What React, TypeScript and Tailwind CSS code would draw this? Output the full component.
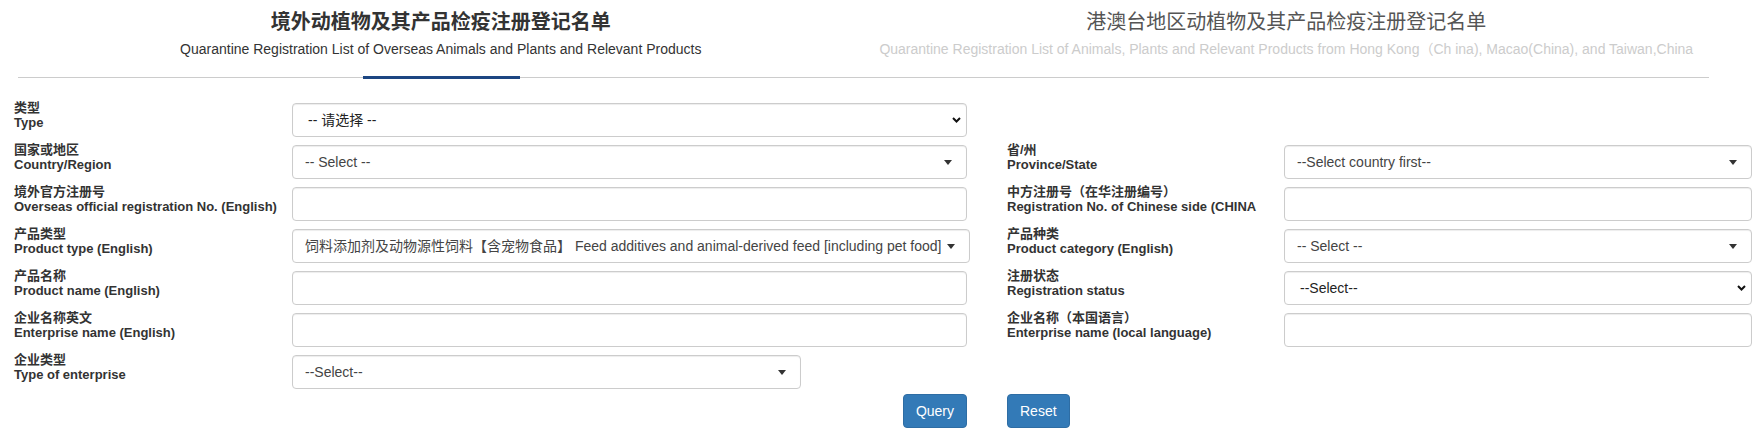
import React from 'react';

type Field = {
    zh: string;
    en: string;
    kind: 'native' | 'select2' | 'input';
    value?: string;
    narrow?: boolean;
};

const rows: { left: Field; right: Field | null }[] = [
    { left: { zh: '类型', en: 'Type', kind: 'native', value: '-- 请选择 --' }, right: null },
    {
        left: { zh: '国家或地区', en: 'Country/Region', kind: 'select2', value: '-- Select --' },
        right: { zh: '省/州', en: 'Province/State', kind: 'select2', value: '--Select country first--' },
    },
    {
        left: { zh: '境外官方注册号', en: 'Overseas official registration No. (English)', kind: 'input' },
        right: { zh: '中方注册号（在华注册编号）', en: 'Registration No. of Chinese side (CHINA', kind: 'input' },
    },
    {
        left: {
            zh: '产品类型',
            en: 'Product type (English)',
            kind: 'select2',
            value: '饲料添加剂及动物源性饲料【含宠物食品】 Feed additives and animal-derived feed [including pet food]',
        },
        right: { zh: '产品种类', en: 'Product category (English)', kind: 'select2', value: '-- Select --' },
    },
    {
        left: { zh: '产品名称', en: 'Product name (English)', kind: 'input' },
        right: { zh: '注册状态', en: 'Registration status', kind: 'native', value: '--Select--' },
    },
    {
        left: { zh: '企业名称英文', en: 'Enterprise name (English)', kind: 'input' },
        right: { zh: '企业名称（本国语言）', en: 'Enterprise name (local language)', kind: 'input' },
    },
    { left: { zh: '企业类型', en: 'Type of enterprise', kind: 'select2', value: '--Select--', narrow: true }, right: null },
];

const font = { fontFamily: '"Liberation Sans", Arial, "Noto Sans CJK SC", sans-serif' };

function Control({ field }: { field: Field }) {
    const box =
        'mt-[3px] h-[34px] flex items-center bg-white border border-[#ccc] rounded-[4px] shadow-[inset_0_1px_1px_rgba(0,0,0,0.075)] text-[14px]';
    const width = field.narrow ? 'w-[509px]' : 'flex-1';

    if (field.kind === 'input') {
        return <div className={`${box} ${width}`} />;
    }

    if (field.kind === 'native') {
        return (
            <div className={`${box} ${width} pl-[15px] pr-[5px] text-[#222]`}>
                <span className="flex-1 whitespace-nowrap">{field.value}</span>
                <svg width="9" height="6" viewBox="0 0 9 6" className="mb-[1px]">
                    <polyline points="1,1 4.5,4.5 8,1" fill="none" stroke="#111" strokeWidth="2" />
                </svg>
            </div>
        );
    }

    // select2 style
    return (
        <div className={`${box} ${width} pl-[12px] pr-[14px] text-[#444]`}>
            <span className="flex-1 whitespace-nowrap overflow-hidden">{field.value}</span>
            <svg width="8" height="5" viewBox="0 0 8 5" className="ml-[6px]">
                <polygon points="0,0 8,0 4,5" fill="#333" />
            </svg>
        </div>
    );
}

function Cell({ field, labelWidth }: { field: Field | null; labelWidth: string }) {
    if (!field) return <div />;
    return (
        <div className="flex items-start">
            <label className={`${labelWidth} shrink-0 text-[13px] font-bold leading-[15px] text-[#333]`}>
                <div>{field.zh}</div>
                <div className="whitespace-nowrap">{field.en}</div>
            </label>
            <Control field={field} />
        </div>
    );
}

export default function App() {
    return (
        <div className="w-[1761px] h-[434px] bg-white overflow-hidden" style={font}>
            {/* Tabs */}
            <div className="ml-[18px] w-[1691px] flex border-b border-[#ccc]">
                <div className="relative flex-1 text-center pt-[8px] pb-[18px]">
                    <div className="text-[20px] leading-[28px] font-bold text-[#333]">境外动植物及其产品检疫注册登记名单</div>
                    <div className="mt-[3px] text-[14px] leading-[20px] text-[#333]">
                        Quarantine Registration List of Overseas Animals and Plants and Relevant Products
                    </div>
                    <div className="absolute left-[345px] bottom-[-2px] w-[157px] h-[3px] bg-[#1c4682]" />
                </div>
                <div className="flex-1 text-center pt-[8px] pb-[18px]">
                    <div className="text-[20px] leading-[28px] text-[#555]">港澳台地区动植物及其产品检疫注册登记名单</div>
                    <div className="mt-[3px] text-[14px] leading-[20px] text-[#ccc] whitespace-nowrap">
                        Quarantine Registration List of Animals, Plants and Relevant Products from Hong Kong（Ch ina), Macao(China), and Taiwan,China
                    </div>
                </div>
            </div>

            {/* Form */}
            <div className="mt-[22px] pl-[14px] grid grid-cols-[953px_745px] gap-x-[40px] gap-y-[5px]">
                {rows.map((row, i) => (
                    <React.Fragment key={i}>
                        <Cell field={row.left} labelWidth="w-[278px]" />
                        <Cell field={row.right} labelWidth="w-[277px]" />
                    </React.Fragment>
                ))}
                <div className="flex justify-end">
                    <button className="h-[34px] px-[12px] text-[14px] text-white bg-[#337ab7] border border-[#2e6da4] rounded-[4px]">
                        Query
                    </button>
                </div>
                <div className="flex">
                    <button className="h-[34px] px-[12px] text-[14px] text-white bg-[#337ab7] border border-[#2e6da4] rounded-[4px]">
                        Reset
                    </button>
                </div>
            </div>
        </div>
    );
}
